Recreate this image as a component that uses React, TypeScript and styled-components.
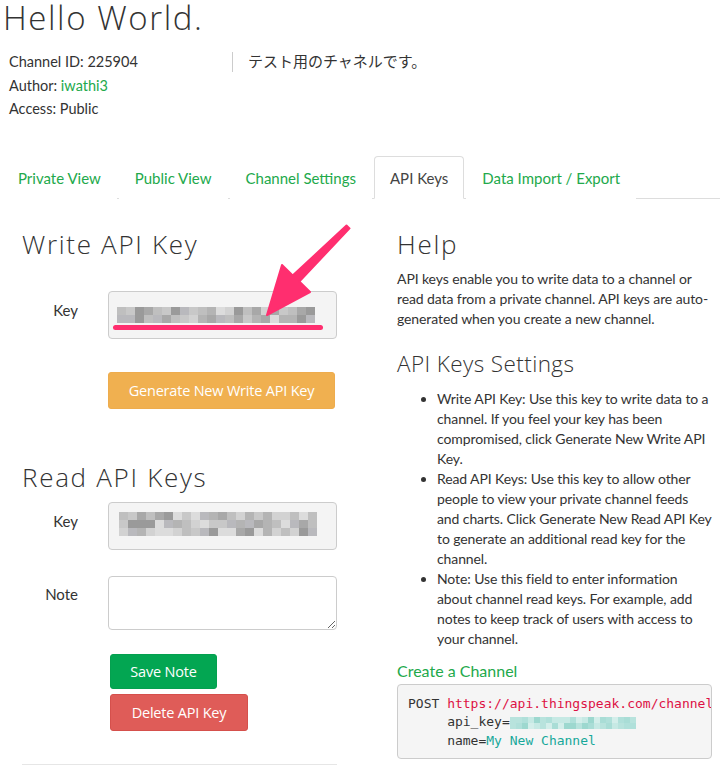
import styled, { createGlobalStyle } from "styled-components";

// GLOBAL
const GlobalStyle = createGlobalStyle`
  body {
    margin: 0;
    background: #fff;
    color: #333;
    font-family: Lato, "Noto Sans CJK JP", sans-serif;
  }
`;

const GREEN = "#22a94b";
const PINK = "#ff2e6f";

// CSS COMPONENTS
const PageCss = styled.div`
  position: relative;
  width: 720px;
  height: 771px;
  overflow: hidden;
`;

const TitleCss = styled.h1`
  font-family: "Open Sans", sans-serif;
  font-weight: 300;
  font-size: 33px;
  line-height: 36px;
  margin: 0;
  padding: 0 0 0 3px;
  letter-spacing: 1.6px;
`;

const MetaRowCss = styled.div`
  display: flex;
  margin-top: 14px;
`;

const MetaListCss = styled.div`
  width: 223px;
  padding-left: 9px;
  font-size: 14.5px;
  line-height: 23.5px;

  a {
    color: ${GREEN};
    text-decoration: none;
  }
`;

const DescriptionCss = styled.p`
  margin: 2px 0 0;
  padding: 0 0 0 15px;
  border-left: 1px solid #ccc;
  height: 20px;
  line-height: 18px;
  font-size: 15px;
  font-family: "Noto Sans CJK JP", sans-serif;
`;

const TabsCss = styled.ul`
  display: flex;
  list-style: none;
  margin: 35px 0 0 2px;
  padding: 0;
  border-bottom: 1px solid #ddd;
`;

const TabCss = styled.li<{ $active?: boolean }>`
  margin-right: 2px;
  margin-bottom: -1px;
  padding: 11px 15px 9px;
  font-size: 15px;
  line-height: 21px;
  border: 1px solid ${(p) => (p.$active ? "#ddd" : "transparent")};
  border-bottom-color: ${(p) => (p.$active ? "#fff" : "transparent")};
  border-radius: 4px 4px 0 0;
  background: #fff;
  color: ${(p) => (p.$active ? "#444" : GREEN)};
`;

const ColumnsCss = styled.div`
  display: grid;
  grid-template-columns: 375px 1fr;
`;

const LeftColCss = styled.section`
  padding-left: 22px;
`;

const RightColCss = styled.section`
  padding: 0 11px 0 22px;
`;

const HeadingCss = styled.h2<{ $top: number; $bottom: number; $small?: boolean }>`
  font-family: "Open Sans", sans-serif;
  font-weight: 300;
  font-size: ${(p) => (p.$small ? "22.5px" : "26px")};
  letter-spacing: ${(p) => (p.$small ? "0.4px" : "1.7px")};
  line-height: 30px;
  margin: ${(p) => p.$top}px 0 ${(p) => p.$bottom}px;
`;

const FormRowCss = styled.div<{ $top?: number }>`
  display: grid;
  grid-template-columns: 56px 229px;
  column-gap: 30px;
  align-items: start;
  margin-top: ${(p) => p.$top ?? 0}px;
`;

const LabelCss = styled.label<{ $pad: number }>`
  text-align: right;
  font-size: 15px;
  line-height: 18px;
  padding-top: ${(p) => p.$pad}px;
`;

const KeyFieldCss = styled.div<{ $padTop: number; $padLeft: number }>`
  position: relative;
  box-sizing: border-box;
  height: 48px;
  border: 1px solid #ccc;
  border-radius: 4px;
  background: #f4f4f4;
  padding: ${(p) => p.$padTop}px 0 0 ${(p) => p.$padLeft}px;
`;

const UnderlineCss = styled.span`
  position: absolute;
  left: 4px;
  top: 33px;
  width: 210px;
  height: 5px;
  border-radius: 3px;
  background: ${PINK};
`;

const NoteAreaCss = styled.textarea`
  display: block;
  box-sizing: border-box;
  width: 229px;
  height: 54px;
  margin: 0;
  border: 1px solid #ccc;
  border-radius: 4px;
  font-family: Lato, sans-serif;
  font-size: 15px;
`;

const ButtonCss = styled.button<{ $variant: "warning" | "success" | "danger"; $w: number; $h: number }>`
  display: block;
  box-sizing: border-box;
  width: ${(p) => p.$w}px;
  height: ${(p) => p.$h}px;
  border: 1px solid transparent;
  border-radius: 3px;
  color: #fff;
  font-family: "Open Sans", sans-serif;
  font-size: 14.5px;
  letter-spacing: -0.2px;
  padding: 0;
  background: ${(p) =>
    p.$variant === "warning" ? "#f0b050" : p.$variant === "success" ? "#03a652" : "#df5c58"};
  border-color: ${(p) =>
    p.$variant === "warning" ? "#eeac4d" : p.$variant === "success" ? "#04a04f" : "#d5504c"};
`;

const ButtonStackCss = styled.div<{ $top: number; $left: number }>`
  display: flex;
  flex-direction: column;
  gap: 5px;
  margin: ${(p) => p.$top}px 0 0 ${(p) => p.$left}px;
`;

const DividerCss = styled.hr`
  width: 315px;
  margin: 33px 0 0;
  border: 0;
  border-top: 1px solid #e6e6e6;
`;

const HelpTextCss = styled.p`
  font-size: 14px;
  line-height: 20px;
  margin: 0;
  letter-spacing: -0.1px;
`;

const ListCss = styled.ul`
  margin: 0;
  padding-left: 40px;
  font-size: 14px;
  line-height: 20px;
  letter-spacing: -0.1px;
`;

const SubLinkCss = styled.a`
  display: block;
  margin-top: 12px;
  color: ${GREEN};
  font-size: 16px;
  line-height: 20px;
  text-decoration: none;
`;

const CodeCss = styled.pre`
  margin: 3px 0 0;
  box-sizing: border-box;
  width: 315px;
  padding: 10px 0 8px 10px;
  background: #f5f5f5;
  border: 1px solid #ccc;
  border-radius: 4px;
  overflow: hidden;
  font-family: "DejaVu Sans Mono", monospace;
  font-size: 13px;
  line-height: 18.5px;
  color: #333;

  .str {
    color: #dd1144;
  }
  .val {
    color: #17a89a;
  }
  .blur {
    display: inline-block;
    vertical-align: middle;
  }
`;

const ArrowCss = styled.svg`
  position: absolute;
  left: 260px;
  top: 220px;
`;

// MOSAIC (pixelated key)
const shades = (seed: number, n: number, palette: string[]) => {
  const out: string[] = [];
  let s = seed;
  for (let i = 0; i < n; i++) {
    s = (s * 9301 + 49297) % 233280;
    out.push(palette[Math.floor((s / 233280) * palette.length)]);
  }
  return out;
};

const GRAYS = ["#9a9a9a", "#a8a8a8", "#b4b4b4", "#bfbfbf", "#c8c8c8", "#d2d2d2", "#dcdcdc", "#b9b9bd"];
const TEALS = ["#a9ddd6", "#b8e3dd", "#c6e9e4", "#9dd8cf", "#d3eeea", "#b0e0da"];

const Mosaic: React.FC<{ cols: number; rows: number; size: number; h: number; seed: number; palette: string[] }> = ({
  cols,
  rows,
  size,
  h,
  seed,
  palette,
}) => {
  const colors = shades(seed, cols * rows, palette);
  return (
    <svg width={cols * size} height={rows * h} style={{ display: "block" }}>
      {colors.map((c, i) => (
        <rect key={i} x={(i % cols) * size} y={Math.floor(i / cols) * h} width={size} height={h} fill={c} />
      ))}
    </svg>
  );
};

const tabs = ["Private View", "Public View", "Channel Settings", "API Keys", "Data Import / Export"];

export default function App() {
  return (
    <PageCss>
      <GlobalStyle />
      <TitleCss>Hello World.</TitleCss>

      <MetaRowCss>
        <MetaListCss>
          <div>Channel ID: 225904</div>
          <div>
            Author: <a href="#">iwathi3</a>
          </div>
          <div>Access: Public</div>
        </MetaListCss>
        <DescriptionCss>テスト用のチャネルです。</DescriptionCss>
      </MetaRowCss>

      <TabsCss>
        {tabs.map((t) => (
          <TabCss key={t} $active={t === "API Keys"}>
            {t}
          </TabCss>
        ))}
      </TabsCss>

      <ColumnsCss>
        <LeftColCss>
          <HeadingCss $top={30} $bottom={32}>
            Write API Key
          </HeadingCss>
          <FormRowCss>
            <LabelCss $pad={10}>Key</LabelCss>
            <KeyFieldCss $padTop={15} $padLeft={8}>
              <Mosaic cols={22} rows={2} size={9} h={8} seed={7} palette={GRAYS} />
              <UnderlineCss />
            </KeyFieldCss>
          </FormRowCss>
          <ButtonStackCss $top={33} $left={86}>
            <ButtonCss $variant="warning" $w={227} $h={37}>
              Generate New Write API Key
            </ButtonCss>
          </ButtonStackCss>

          <HeadingCss $top={53} $bottom={10}>
            Read API Keys
          </HeadingCss>
          <FormRowCss>
            <LabelCss $pad={10}>Key</LabelCss>
            <KeyFieldCss $padTop={9} $padLeft={10}>
              <Mosaic cols={22} rows={3} size={9} h={8} seed={31} palette={GRAYS} />
            </KeyFieldCss>
          </FormRowCss>
          <FormRowCss $top={26}>
            <LabelCss $pad={9}>Note</LabelCss>
            <NoteAreaCss />
          </FormRowCss>
          <ButtonStackCss $top={24} $left={88}>
            <ButtonCss $variant="success" $w={107} $h={35}>
              Save Note
            </ButtonCss>
            <ButtonCss $variant="danger" $w={138} $h={37}>
              Delete API Key
            </ButtonCss>
          </ButtonStackCss>
          <DividerCss />
        </LeftColCss>

        <RightColCss>
          <HeadingCss $top={30} $bottom={10}>
            Help
          </HeadingCss>
          <HelpTextCss>
            API keys enable you to write data to a channel or read data from a private channel. API keys are auto-generated
            when you create a new channel.
          </HelpTextCss>
          <HeadingCss $small $top={20} $bottom={10}>
            API Keys Settings
          </HeadingCss>
          <ListCss>
            <li>
              Write API Key: Use this key to write data to a channel. If you feel your key has been compromised, click
              Generate New Write API Key.
            </li>
            <li>
              Read API Keys: Use this key to allow other people to view your private channel feeds and charts. Click
              Generate New Read API Key to generate an additional read key for the channel.
            </li>
            <li>
              Note: Use this field to enter information about channel read keys. For example, add notes to keep track of
              users with access to your channel.
            </li>
          </ListCss>
          <SubLinkCss href="#">Create a Channel</SubLinkCss>
          <CodeCss>
            POST <span className="str">https://api.thingspeak.com/channel</span>
            {"\n"}
            {"     api_key="}
            <span className="blur">
              <Mosaic cols={21} rows={2} size={6} h={6} seed={3} palette={TEALS} />
            </span>
            {"\n"}
            {"     name="}
            <span className="val">My New Channel</span>
          </CodeCss>
        </RightColCss>
      </ColumnsCss>

      <ArrowCss width={100} height={100} viewBox="0 0 100 100">
        <polygon
          points="86.5,5.6 89.5,8.4 39.3,61.5 50,72 7,95 22,45 32.7,55.5"
          fill={PINK}
          stroke={PINK}
          strokeWidth={2}
          strokeLinejoin="round"
        />
      </ArrowCss>
    </PageCss>
  );
}
